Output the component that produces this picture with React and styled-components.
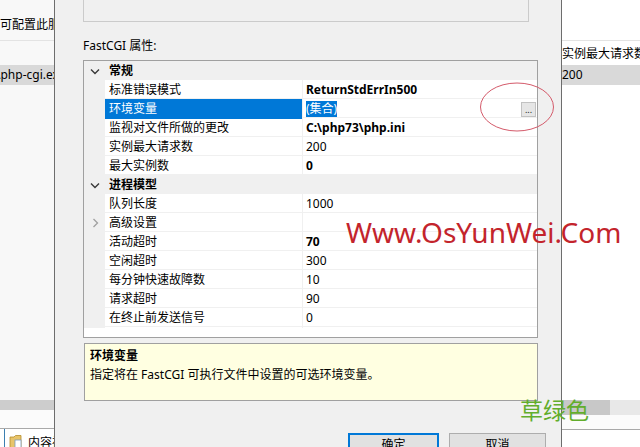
import React from "react";
import styled, { createGlobalStyle } from "styled-components";

const GlobalStyle = createGlobalStyle`
  html, body { margin: 0; padding: 0; background: #fff; }
  body {
    width: 640px;
    height: 447px;
    overflow: hidden;
    font-family: "Segoe UI", "Noto Sans", "Noto Sans CJK SC", sans-serif;
    font-size: 12px;
    color: #000;
  }
`;

const Screen = styled.div`
  position: relative;
  display: flex;
  width: 640px;
  height: 447px;
  overflow: hidden;
`;

// background windows left and right of the dialog
const SidePane = styled.div`
  display: flex;
  flex-direction: column;
  width: ${(p) => p.width || "auto"};
  flex: ${(p) => (p.grow ? 1 : "none")};
  background: ${(p) => p.bg || "#fff"};
  overflow: hidden;
  white-space: nowrap;
  & > * { flex-shrink: 0; }
`;

const PaneHeader = styled.div`
  box-sizing: border-box;
  height: ${(p) => p.h}px;
  padding-top: ${(p) => p.pad || 0}px;
  line-height: 16px;
  border-top: ${(p) => (p.topLine ? "1px solid #e3e3e3" : "none")};
  border-bottom: ${(p) => (p.topLine ? "none" : "1px solid #e3e3e3")};
`;

const PaneGap = styled.div`
  height: ${(p) => p.h || 0}px;
  flex: ${(p) => (p.fill ? "1 1 0" : "none")} !important;
`;

const PaneRow = styled.div`
  height: 20px;
  line-height: 20px;
  background: #d9d9d9;
  text-indent: ${(p) => p.indent || 0}px;
`;

const ScrollTrack = styled.div`
  display: flex;
  height: ${(p) => p.h}px;
  background: ${(p) => p.bg};
`;

const ScrollThumb = styled.div`
  width: ${(p) => p.w}px;
  background: #c8c8c8;
`;

const PaneFoot = styled.div`
  height: ${(p) => p.h}px;
  background: #fbfbfb;
  border-bottom: 1px solid #a9a9a9;
`;

const TabStrip = styled.div`
  height: 18px;
  display: flex;
  align-items: flex-start;
  gap: 4px;
  background: #fff;
  & > * { flex-shrink: 0; }
`;

const TabEdge = styled.div`
  width: 4px;
  align-self: stretch;
  border-right: 1px solid #3c7fb1;
`;

const TabLabel = styled.span`
  font-size: 12px;
  line-height: 18px;
  padding-top: 5px;
`;

// the dialog
const Dialog = styled.div`
  display: flex;
  flex-direction: column;
  width: 508px;
  flex: none;
  box-sizing: border-box;
  border-left: 1px solid #6d6d6d;
  border-right: 1px solid #6d6d6d;
  background: #f0f0f0;
  padding-left: 28px;
  overflow: hidden;
  & > * { flex-shrink: 0; }
`;

const TextBox = styled.div`
  width: 446px;
  height: 22px;
  box-sizing: border-box;
  border: 1px solid #cbcbcb;
  border-top: none;
  background: #f0f0f0;
`;

const Label = styled.div`
  margin-top: 16px;
  line-height: 16px;
`;

const Grid = styled.div`
  margin-top: 6px;
  width: 455px;
  height: 278px;
  box-sizing: border-box;
  border: 1px solid #a0a0a0;
  background: #fff;
`;

const Row = styled.div`
  display: grid;
  grid-template-columns: 21px 197px 1fr;
  height: 19px;
  box-sizing: border-box;
  border-bottom: 1px solid #f0f0f0;
  background: ${(p) => (p.category ? "#f0f0f0" : "#fff")};
  line-height: 20px;
`;

const Gutter = styled.div`
  display: flex;
  align-items: center;
  justify-content: center;
  background: #f0f0f0;
  padding-left: 1px;
`;

const NameCell = styled.div`
  padding-left: 4px;
  font-weight: ${(p) => (p.category ? 700 : 400)};
  background: ${(p) => (p.selected ? "#0078d7" : "transparent")};
  color: ${(p) => (p.selected ? "#fff" : "#000")};
`;

const ValueCell = styled.div`
  display: flex;
  align-items: center;
  justify-content: space-between;
  padding-left: 3px;
  padding-right: 1px;
  border-left: 1px solid #f0f0f0;
  font-weight: ${(p) => (p.bold ? 700 : 400)};
`;

const Selection = styled.span`
  background: #0078d7;
  color: #fff;
  line-height: 16px;
`;

const EllipsisButton = styled.div`
  width: 15px;
  height: 15px;
  box-sizing: border-box;
  border: 1px solid #c2c2c2;
  background: #e6e6e6;
  font-size: 9px;
  line-height: 14px;
  text-align: center;
  color: #222;
`;

const Desc = styled.div`
  margin-top: 5px;
  margin-left: 1px;
  width: 454px;
  height: 58px;
  box-sizing: border-box;
  border: 1px solid #a0a0a0;
  background: #ffffe1;
  padding: 2px 5px 0;
  line-height: 19px;
`;

const DescTitle = styled.div`
  font-weight: 700;
`;

const Buttons = styled.div`
  display: flex;
  justify-content: flex-end;
  gap: 10px;
  margin-top: 32px;
  padding-right: 15px;
`;

const Button = styled.div`
  width: ${(p) => p.w}px;
  height: 23px;
  box-sizing: border-box;
  border: ${(p) => (p.primary ? "2px solid #0078d7" : "1px solid #adadad")};
  background: #e1e1e1;
  text-align: center;
  line-height: ${(p) => (p.primary ? 19 : 21)}px;
`;

// overlays drawn onto the screenshot
const Circle = styled.svg`
  position: absolute;
  left: 479px;
  top: 82px;
`;

const Watermark = styled.div`
  position: absolute;
  left: 346px;
  top: ${(p) => p.top}px;
  font-family: "Noto Sans", "Noto Sans CJK SC", sans-serif;
  font-size: ${(p) => p.size}px;
  line-height: 1.2;
  color: ${(p) => p.color};
  white-space: nowrap;
`;

const GreenMark = styled(Watermark)`
  left: 520px;
`;

const ChevronDown = () => (
  <svg width="10" height="7" viewBox="0 0 10 7">
    <path d="M1 1.5 L5 5.5 L9 1.5" fill="none" stroke="#3a3a3a" strokeWidth="1.4" />
  </svg>
);

const ChevronRight = () => (
  <svg width="7" height="10" viewBox="0 0 7 10">
    <path d="M1.5 1 L5.5 5 L1.5 9" fill="none" stroke="#a0a0a0" strokeWidth="1.3" />
  </svg>
);

const FolderIcon = () => (
  <svg width="15" height="16" viewBox="0 0 15 16" style={{ marginTop: 3 }}>
    <path d="M1 5 h4 l1.5 -1.5 h5.5 v12 h-11 z" fill="#e8c46a" stroke="#b58d2c" strokeWidth="0.8" />
    <rect x="6" y="8" width="6" height="8" fill="#fff" stroke="#7a9cc0" strokeWidth="0.8" />
  </svg>
);

const rows = [
  { cat: true, name: "常规" },
  { name: "标准错误模式", value: "ReturnStdErrIn500", bold: true },
  { name: "环境变量", value: "(集合)", selected: true },
  { name: "监视对文件所做的更改", value: "C:\\php73\\php.ini", bold: true },
  { name: "实例最大请求数", value: "200" },
  { name: "最大实例数", value: "0", bold: true },
  { cat: true, name: "进程模型" },
  { name: "队列长度", value: "1000" },
  { name: "高级设置", value: "", collapsed: true },
  { name: "活动超时", value: "70", bold: true },
  { name: "空闲超时", value: "300" },
  { name: "每分钟快速故障数", value: "10" },
  { name: "请求超时", value: "90" },
  { name: "在终止前发送信号", value: "0" },
];

const PropertyRow = ({ row }) => {
  if (row.cat) {
    return (
      <Row category>
        <Gutter>
          <ChevronDown />
        </Gutter>
        <NameCell category>{row.name}</NameCell>
        <ValueCell />
      </Row>
    );
  }
  return (
    <Row>
      <Gutter>{row.collapsed && <ChevronRight />}</Gutter>
      <NameCell selected={row.selected}>{row.name}</NameCell>
      <ValueCell bold={row.bold}>
        {row.selected ? <Selection>{row.value}</Selection> : row.value}
        {row.selected && <EllipsisButton>...</EllipsisButton>}
      </ValueCell>
    </Row>
  );
};

export default function App() {
  return (
    <>
      <GlobalStyle />
      <Screen>
        <SidePane width="54px" bg="#f8f8f8">
          <PaneHeader h={41} pad={17}>可配置此服务器</PaneHeader>
          <PaneGap h={24} />
          <PaneRow indent={-4}>\php-cgi.exe</PaneRow>
          <PaneGap fill />
          <ScrollTrack h={10} bg="#cdcdcd" />
          <PaneFoot h={18} />
          <TabStrip>
            <TabEdge />
            <FolderIcon />
            <TabLabel>内容视图</TabLabel>
          </TabStrip>
        </SidePane>

        <Dialog>
          <TextBox />
          <Label>FastCGI 属性:</Label>
          <Grid>
            {rows.map((r) => (
              <PropertyRow key={r.name} row={r} />
            ))}
          </Grid>
          <Desc>
            <DescTitle>环境变量</DescTitle>
            <div>指定将在 FastCGI 可执行文件中设置的可选环境变量。</div>
          </Desc>
          <Buttons>
            <Button primary w={91}>确定</Button>
            <Button w={97}>取消</Button>
          </Buttons>
        </Dialog>

        <SidePane grow bg="#fff">
          <PaneGap h={40} />
          <PaneHeader h={25} pad={5} topLine>
            实例最大请求数
          </PaneHeader>
          <PaneRow>200</PaneRow>
          <PaneGap fill />
          <ScrollTrack h={15} bg="#e8e8e8">
            <ScrollThumb w={48} />
          </ScrollTrack>
          <PaneFoot h={14} />
          <PaneGap h={17} />
        </SidePane>

        <Circle width="76" height="50" viewBox="0 0 76 50">
          <ellipse cx="38" cy="25" rx="36.5" ry="24" fill="none" stroke="#d45a6a" strokeWidth="1" />
        </Circle>
        <Watermark top={216} size={28} color="#c3242c">Www.OsYunWei.Com</Watermark>
        <GreenMark top={397} size={23} color="#62ad2c">草绿色</GreenMark>
      </Screen>
    </>
  );
}
